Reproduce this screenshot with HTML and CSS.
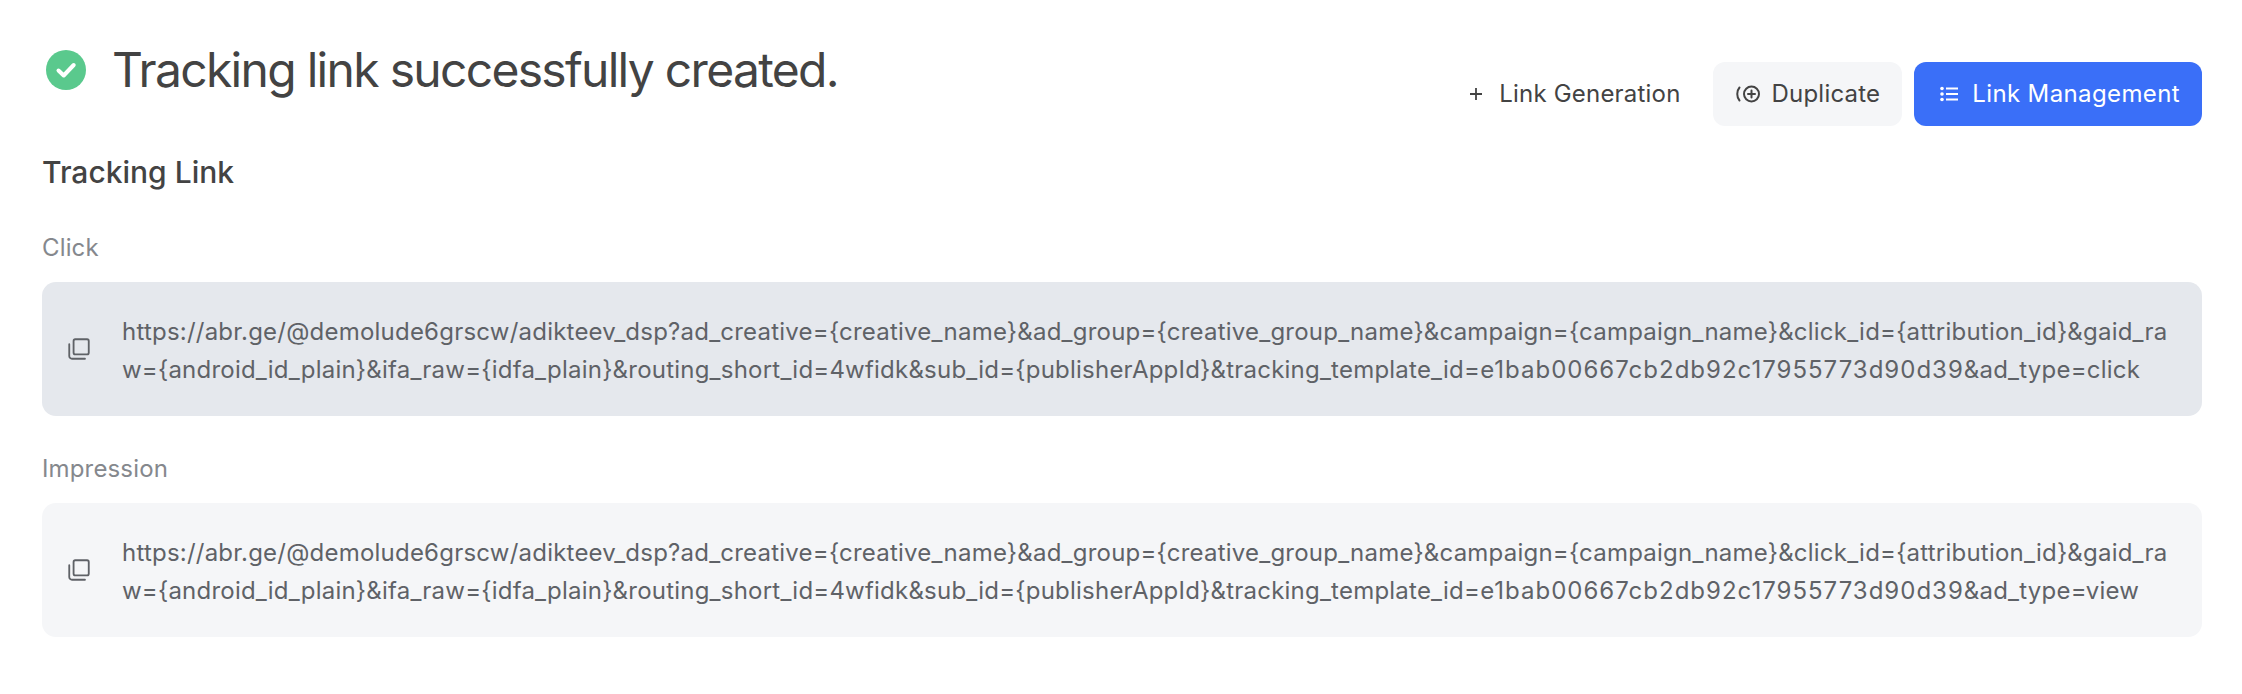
FILE: index.html
```html
<!DOCTYPE html>
<html lang="en">
<head>
<meta charset="utf-8">
<title>Tracking link</title>
<link rel="stylesheet" href="styles.css">
</head>
<body>
<main class="page">
  <header class="top">
    <div class="result">
      <svg class="ok-icon" viewBox="0 0 40 40"><circle cx="20" cy="20" r="20" fill="#5ac98d"/><path d="M12.500 20.500l5.200 5 10-10.500" fill="none" stroke="#fff" stroke-width="4" stroke-linecap="round" stroke-linejoin="round"/></svg>
      <h1 class="title">Tracking link successfully created.</h1>
    </div>
    <div class="actions">
      <button class="btn btn-text"><svg class="icon-plus" viewBox="0 0 14 14"><path d="M7 1v12M1 7h12" fill="none" stroke="currentColor" stroke-width="1.800"/></svg>Link Generation</button>
      <button class="btn btn-light"><svg class="icon-dup" viewBox="0 0 26 18"><circle cx="16.500" cy="9" r="7.500" fill="none" stroke="currentColor" stroke-width="2"/><path d="M16.500 5.500v7M13 9h7M4.500 2.500C1.500 6 1.500 12 4.500 15.500" fill="none" stroke="currentColor" stroke-width="2" stroke-linecap="round"/></svg>Duplicate</button>
      <button class="btn btn-primary"><svg class="icon-list" viewBox="0 0 18 16"><g fill="currentColor"><circle cx="2" cy="2.500" r="1.800"/><circle cx="2" cy="8" r="1.800"/><circle cx="2" cy="13.500" r="1.800"/><rect x="6" y="1.500" width="12" height="2"/><rect x="6" y="7" width="12" height="2"/><rect x="6" y="12.500" width="12" height="2"/></g></svg>Link Management</button>
    </div>
  </header>
  <h2 class="section">Tracking Link</h2>
  <div class="label">Click</div>
  <div class="link link-active">
    <svg class="copy" viewBox="0 0 24 24"><path d="M8.500 3h11A1.500 1.500 0 0 1 21 4.500v11a1.500 1.500 0 0 1-1.500 1.500h-11A1.500 1.500 0 0 1 7 15.500v-11A1.500 1.500 0 0 1 8.500 3zM3 7.500v11A2.500 2.500 0 0 0 5.500 21h12" fill="none" stroke="currentColor" stroke-width="1.700" stroke-linecap="round"/></svg>
    <div class="url">https://abr.ge/@demolude6grscw/adikteev_dsp?ad_creative={creative_name}&amp;ad_group={creative_group_name}&amp;campaign={campaign_name}&amp;click_id={attribution_id}&amp;gaid_raw={android_id_plain}&amp;ifa_raw={idfa_plain}&amp;routing_short_id=4wfidk&amp;sub_id={publisherAppId}&amp;tracking_template_id=<span class="hash">e1bab00667cb2db92c17955773d90d39</span>&amp;ad_type=click</div>
  </div>
  <div class="label">Impression</div>
  <div class="link">
    <svg class="copy" viewBox="0 0 24 24"><path d="M8.500 3h11A1.500 1.500 0 0 1 21 4.500v11a1.500 1.500 0 0 1-1.500 1.500h-11A1.500 1.500 0 0 1 7 15.500v-11A1.500 1.500 0 0 1 8.500 3zM3 7.500v11A2.500 2.500 0 0 0 5.500 21h12" fill="none" stroke="currentColor" stroke-width="1.700" stroke-linecap="round"/></svg>
    <div class="url">https://abr.ge/@demolude6grscw/adikteev_dsp?ad_creative={creative_name}&amp;ad_group={creative_group_name}&amp;campaign={campaign_name}&amp;click_id={attribution_id}&amp;gaid_raw={android_id_plain}&amp;ifa_raw={idfa_plain}&amp;routing_short_id=4wfidk&amp;sub_id={publisherAppId}&amp;tracking_template_id=<span class="hash">e1bab00667cb2db92c17955773d90d39</span>&amp;ad_type=view</div>
  </div>
</main>
</body>
</html>
```
FILE: styles.css
```css
* { box-sizing: border-box; }
html, body { margin: 0; background: #fff; }
body { font-family: Inter, "Liberation Sans", sans-serif; color: #434343; overflow: hidden; }
.page { padding: 40px 40px 0 42px; }
.top { display: flex; justify-content: space-between; align-items: flex-start; height: 113px; }
.result { display: flex; align-items: center; gap: 26px; padding-left: 4px; }
.ok-icon { width: 40px; height: 40px; flex: none; }
.title { margin: 0; font-size: 48px; line-height: 60px; font-weight: 400; color: #434343; letter-spacing: -1.7px; }
.actions { display: flex; gap: 12px; margin-top: 22px; }
.btn { display: flex; align-items: center; height: 64px; border: 0; border-radius: 12px; font: 400 24px/32px Inter, "Liberation Sans", sans-serif; letter-spacing: 0.2px; color: #434343; background: none; padding: 0 22px; }
.btn svg { flex: none; }
.icon-plus { width: 14px; height: 14px; margin-right: 16px; }
.icon-dup { width: 26px; height: 18px; margin-right: 11px; }
.icon-list { width: 18px; height: 16px; margin-right: 14px; }
.btn-text { padding: 0 20px; }
.btn-light { background: #f5f6f8; padding: 0 22px; }
.btn-primary { background: #3a6ff8; color: #fff; padding-left: 26px; letter-spacing: 0.38px; }
.section { margin: 0; padding: 1px 0 5px; font-size: 30px; line-height: 36px; font-weight: 500; color: #434343; }
.label { font-size: 24px; line-height: 32px; letter-spacing: 0.15px; color: #85888d; margin-top: 37px; }
.link { display: flex; align-items: center; gap: 30px; margin-top: 18px; padding: 31px 26px 27px 24px; background: #f5f6f8; border-radius: 14px; color: #5f6267; }
.link-active { background: #e5e8ed; }
.copy { width: 26px; height: 26px; flex: none; margin-top: -4px; }
.url { font-size: 24px; line-height: 38px; letter-spacing: 0.22px; word-break: break-all; }
.hash { letter-spacing: 1px; }
```
